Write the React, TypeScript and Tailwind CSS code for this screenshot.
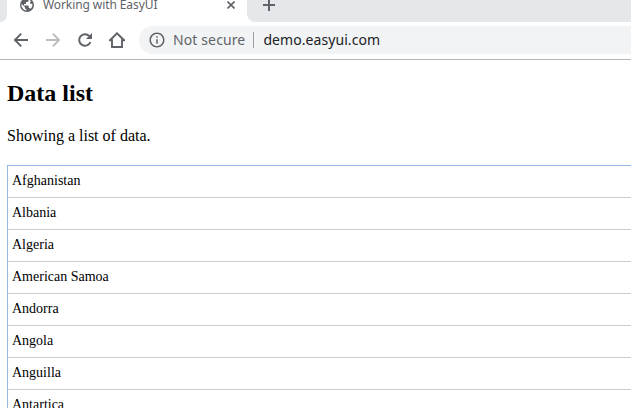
import type { ReactNode } from 'react';
import { MdInfoOutline } from 'react-icons/md';

const countries = [
  'Afghanistan',
  'Albania',
  'Algeria',
  'American Samoa',
  'Andorra',
  'Angola',
  'Anguilla',
  'Antartica',
];

function GlobeIcon() {
  return (
    <svg className="size-[14px] shrink-0" viewBox="0 0 14 14">
      <circle cx="7" cy="7" r="7" fill="currentColor" />
      <path d="M8.6 1.6v1.2c0 .7-.6 1.2-1.3 1.2H6v1.4c0 .4-.3.7-.7.7H4v1.3h4c.4 0 .7.3.7.7v1.8h.7c.6 0 1.1.4 1.3.9.9-1 1.7-2.300 1.700-3.800 0-.4 0-.8-.1-1.200H10V4.200L11 3.300A5.600 5.600 0 0 0 8.600 1.600zM1.600 5.900A5.600 5.600 0 0 0 6.300 12.500v-1.300c-.8 0-1.400-.6-1.400-1.400v-.7z" fill="white" />
    </svg>
  );
}

function TabStrip() {
  return (
    <div className="flex h-[22px] shrink-0 bg-white">
      <div className="w-[7px] shrink-0 rounded-br-[7px] bg-[#e4e8eb]" />
      <div className="flex h-[9px] w-60 shrink-0 items-center pl-[13px] text-[#5f6368]">
        <GlobeIcon />
        <span className="ml-[9px] font-['Noto_Sans',sans-serif] text-[12px] leading-4 tracking-[-0.09px] whitespace-nowrap">
          Working with EasyUI
        </span>
        <svg className="mt-px mr-[12px] ml-auto size-2 shrink-0" viewBox="0 0 8 8" fill="none" stroke="currentColor" strokeWidth="1.6">
          <path d="M.5.5l7 7M7.5.5l-7 7" />
        </svg>
      </div>
      <div className="flex-1 rounded-bl-[8px] bg-[#e4e8eb] pl-4 text-[#5f6368]">
        <svg className="-mt-px size-3" viewBox="0 0 12 12" fill="none" stroke="currentColor" strokeWidth="2">
          <path d="M6 0v12M0 6h12" />
        </svg>
      </div>
    </div>
  );
}

function ToolButton({ children }: { children: ReactNode }) {
  return <button className="flex size-8 shrink-0 items-center justify-center">{children}</button>;
}

function Toolbar() {
  return (
    <div className="flex h-[38px] shrink-0 items-center border-b border-[#b6b6b8] bg-white pb-px pl-[5px] text-[#5f6368]">
      <ToolButton>
        <svg className="size-4" viewBox="0 0 16 16" fill="none" stroke="currentColor" strokeWidth="1.9">
          <path d="M15 8H2.400M8.200 1.700 1.900 8l6.300 6.300" />
        </svg>
      </ToolButton>
      <ToolButton>
        <svg className="size-4 text-[#babcbe]" viewBox="0 0 16 16" fill="none" stroke="currentColor" strokeWidth="1.9">
          <path d="M1 8h12.600M7.800 1.700 14.100 8l-6.300 6.300" />
        </svg>
      </ToolButton>
      <ToolButton>
        <svg className="size-4" viewBox="0 0 16 16" fill="none" stroke="currentColor" strokeWidth="2">
          <path d="M13.400 10A5.800 5.800 0 1 1 12.300 4.100" />
          <path d="M15 1v6H9z" fill="currentColor" stroke="none" />
        </svg>
      </ToolButton>
      <ToolButton>
        <svg className="size-4" viewBox="0 0 16 16" fill="none" stroke="currentColor" strokeWidth="1.9">
          <path d="M1 8.200 8 1.300l7 6.900h-2V15H3V8.200z" />
        </svg>
      </ToolButton>
      <div className="ml-[6px] flex h-7 flex-1 items-center rounded-l-full bg-[#f1f3f4] pl-[9px] font-['Noto_Sans',sans-serif] text-[14px] leading-5 whitespace-nowrap">
        <MdInfoOutline className="size-[18px] shrink-0" />
        <span className="ml-[7px] tracking-[0.12px]">Not secure</span>
        <span className="ml-[8px] h-4 w-px bg-[#9aa0a6]" />
        <span className="ml-[9px] tracking-[0.07px] text-[#202124]">demo.easyui.com</span>
      </div>
    </div>
  );
}

export default function App() {
  return (
    <div className="flex h-[408px] w-[631px] flex-col overflow-hidden bg-white">
      <TabStrip />
      <Toolbar />
      <main className="flex-1 overflow-hidden pt-5 pl-[7px] font-['Liberation_Serif',serif] text-black">
        <h2 className="text-[24px] leading-[27px] font-bold">Data list</h2>
        <p className="mt-5 text-[16px] leading-[18px]">Showing a list of data.</p>
        <ul className="mt-5 border-t border-l border-[#95b8e7]">
          {countries.map((country) => (
            <li key={country} className="h-8 border-b border-[#ccc] pl-1 text-[14px] leading-[30px]">
              {country}
            </li>
          ))}
        </ul>
      </main>
    </div>
  );
}
